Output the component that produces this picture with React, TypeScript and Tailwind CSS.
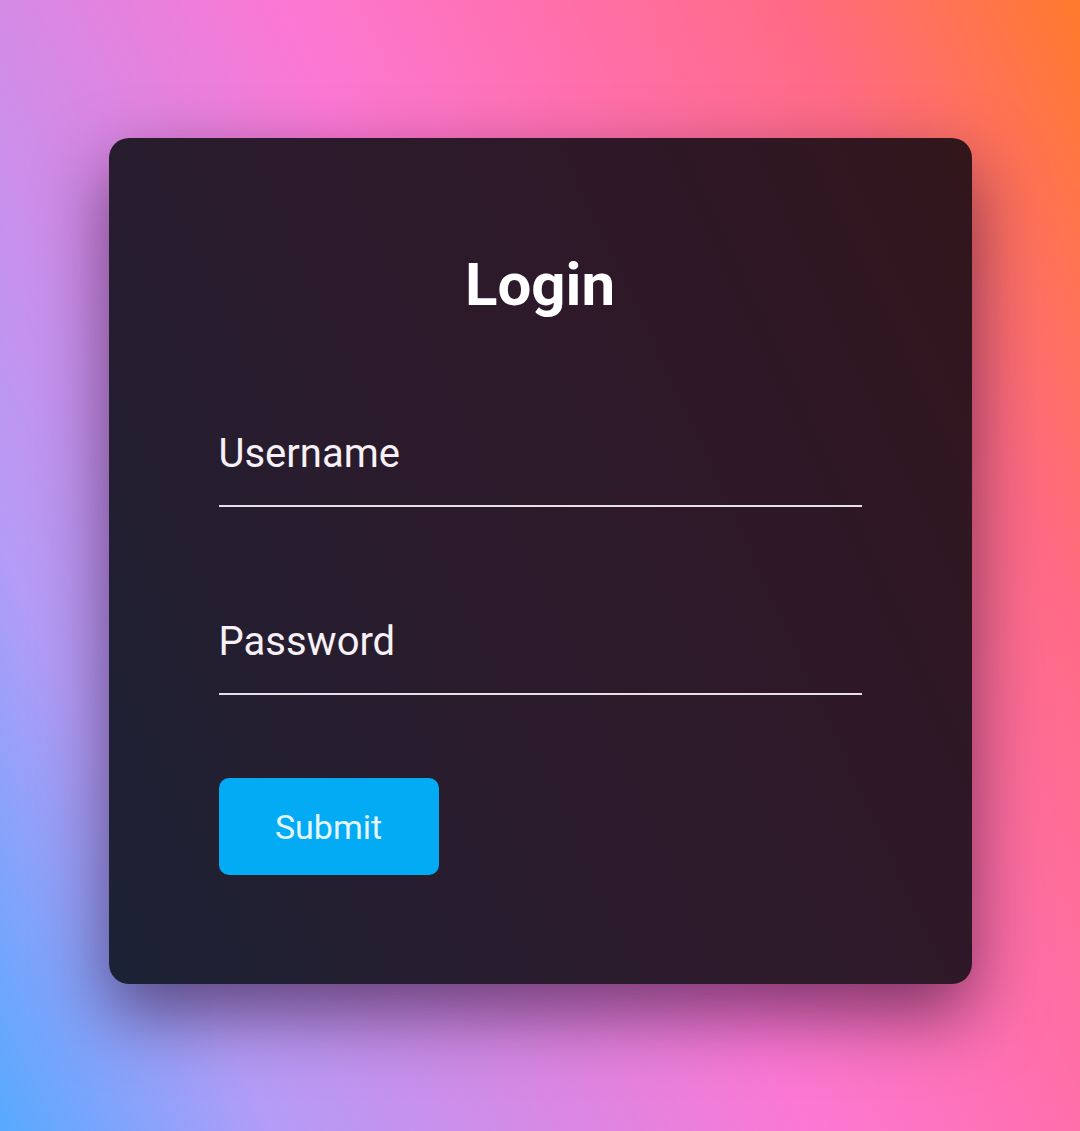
import { useState } from 'react';

export default function App() {
  const [username, setUsername] = useState('');
  const [password, setPassword] = useState('');

  return (
    <div
      className="min-h-screen w-full flex justify-center pt-[138px] bg-[linear-gradient(65deg,#56aaff_0%,#b49cf7_17%,#d48ae6_33%,#fb78d4_50%,#ff70b0_65%,#ff6b85_82%,#ff7a2b_100%)]"
      style={{ fontFamily: 'Roboto, "Noto Sans", sans-serif' }}
    >
      {/* Card */}
      <form
        className="w-[863px] h-[846px] rounded-[20px] px-[110px] pt-[117px] flex flex-col bg-[linear-gradient(65deg,#1b2235_0%,#2a1b2c_40%,#2e1828_70%,#31161b_100%)] shadow-[0_30px_70px_rgba(20,0,30,0.55)]"
        onSubmit={(e) => e.preventDefault()}
      >
        <h1 className="text-center text-white font-bold text-[60px] leading-none h-[60px]">Login</h1>

        <input
          type="text"
          value={username}
          onChange={(e) => setUsername(e.target.value)}
          placeholder="Username"
          className="mt-[118px] w-full h-[74px] pb-[32px] bg-transparent outline-none border-0 border-b-2 border-[#e6dfe8] text-[40px] leading-none text-[#f7f1f7] placeholder:text-[#f7f1f7]"
        />

        <input
          type="password"
          value={password}
          onChange={(e) => setPassword(e.target.value)}
          placeholder="Password"
          className="mt-[114px] w-full h-[74px] pb-[32px] bg-transparent outline-none border-0 border-b-2 border-[#e6dfe8] text-[40px] leading-none text-[#f7f1f7] placeholder:text-[#f7f1f7]"
        />

        <div className="mt-[83px]">
          <button
            type="submit"
            className="w-[220px] h-[97px] rounded-[10px] bg-[#03aaf4] text-[#e4f7ff] text-[34px] leading-none"
          >
            Submit
          </button>
        </div>
      </form>
    </div>
  );
}
